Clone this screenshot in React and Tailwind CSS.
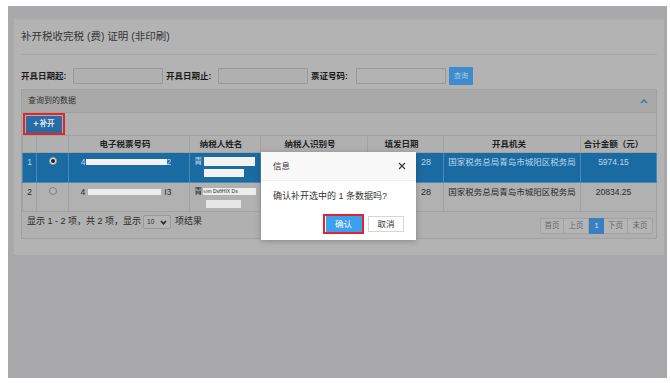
export default function App() {
  const cols = [14, 32, 121, 71, 107, 76, 137, 76];
  return (
    <div className="w-[670px] h-[383px] bg-white pt-[6px] pl-[8px] pr-[3px] pb-[5px] font-['Liberation_Sans','Noto_Sans_CJK_SC',sans-serif] text-[#222]">
      <div className="relative h-full bg-[#a9a9ab] pt-[13px] pl-[6px] pr-[3px]">
        <div className="bg-[#b3b3b3] px-[7px] pb-[16px]">
          <div className="h-[36px] flex items-center border-b border-[#a7a7a7] text-[10.5px] text-[#333]">
            补开税收完税 (费) 证明 (非印刷)
          </div>
          <div className="mt-[12px] h-[18px] flex items-center text-[8.5px] font-bold text-[#1a1a1a]">
            <span className="w-[52px]">开具日期起:</span>
            <div className="w-[90px] h-[16px] bg-[#b0b0b0] border border-[#9a9a9a] rounded-[1px]" />
            <span className="w-[52px] ml-[3px]">开具日期止:</span>
            <div className="w-[90px] h-[16px] bg-[#b0b0b0] border border-[#9a9a9a] rounded-[1px]" />
            <span className="w-[45px] ml-[3px]">票证号码:</span>
            <div className="w-[90px] h-[16px] bg-[#b3b3b3] border border-[#9a9a9a] rounded-[1px]" />
            <div className="ml-[3px] w-[24px] h-[18px] bg-[#3f8bcb] rounded-[1px] flex items-center justify-center text-[7px] font-normal text-[#a9cdec]">
              查询
            </div>
          </div>
          <div className="mt-[4px] border border-[#a0a0a0] bg-[#b0b0b0]">
            <div className="h-[23px] bg-[#a9a9a9] border-b border-[#a0a0a0] flex items-center justify-between pl-[6px] pr-[8px] text-[8px] text-[#333]">
              <span>查询到的数据</span>
              <svg width="8" height="6" viewBox="0 0 8 6">
                <polyline points="1,5 4,2 7,5" fill="none" stroke="#41719b" strokeWidth="1.4" />
              </svg>
            </div>
            <div className="pl-[1px]">
              <div className="w-[42px] h-[22px] border-2 border-[#e0262b] flex items-center justify-center">
                <div className="w-[36px] h-[17px] bg-[#2c6aa4] flex items-center justify-center text-[7.5px] text-[#dfe9f3] font-bold">
                  <span className="text-[9px] leading-none mr-[1px]">+</span>补开
                </div>
              </div>
            </div>
            <table className="w-full table-fixed border-collapse text-[8.5px]">
              <colgroup>
                {cols.map((w, i) => (
                  <col key={i} style={{ width: w }} />
                ))}
              </colgroup>
              <thead>
                <tr className="h-[17px] bg-[#b0b0b0] text-[#222] font-bold">
                  <th className="border border-[#a2a2a2]"></th>
                  <th className="border border-[#a2a2a2]"></th>
                  <th className="border border-[#a2a2a2] pr-[8px]">电子税票号码</th>
                  <th className="border border-[#a2a2a2] pr-[8px]">纳税人姓名</th>
                  <th className="border border-[#a2a2a2] pr-[8px]">纳税人识别号</th>
                  <th className="border border-[#a2a2a2] pr-[8px]">填发日期</th>
                  <th className="border border-[#a2a2a2] pr-[6px]">开具机关</th>
                  <th className="border border-[#a2a2a2] pr-[10px]">合计金额（元）</th>
                </tr>
              </thead>
              <tbody>
                <tr className="h-[30px] bg-[#1b6ba3] text-[#bcd5ea] align-top">
                  <td className="border border-[#4a88b8] text-center pt-[3px]">1</td>
                  <td className="border border-[#4a88b8] pt-[4px]">
                    <div className="mx-auto w-[8px] h-[8px] rounded-full bg-[#e8e8e8] border border-[#999] flex items-center justify-center">
                      <div className="w-[4px] h-[4px] rounded-full bg-[#222]" />
                    </div>
                  </td>
                  <td className="border border-[#4a88b8] pt-[3px]">
                    <div className="flex items-center justify-center pr-[6px]">
                      <span>4</span>
                      <div className="w-[81px] h-[6px] bg-[#f2f2f2]" />
                      <span>2</span>
                    </div>
                  </td>
                  <td className="border border-[#4a88b8] pt-[3px] pl-[4px]">
                    <div className="flex items-center h-[11px]">
                      <span>青</span>
                      <div className="ml-[1px] w-[51px] h-[9px] bg-[#f2f2f2]" />
                    </div>
                    <div className="flex items-center h-[10px] mt-[1px] pl-[10px]">
                      <div className="w-[40px] h-[8px] bg-[#f2f2f2]" />
                    </div>
                  </td>
                  <td className="border border-[#4a88b8]"></td>
                  <td className="border border-[#4a88b8] pt-[3px] text-right pr-[12px] text-[9px]">28</td>
                  <td className="border border-[#4a88b8] pt-[3px] text-center whitespace-nowrap">国家税务总局青岛市城阳区税务局</td>
                  <td className="border border-[#4a88b8] pt-[3px] text-center pr-[10px]">5974.15</td>
                </tr>
                <tr className="h-[29px] bg-[#b1b1b1] text-[#2a2a2a] align-top">
                  <td className="border border-[#a2a2a2] text-center pt-[3px]">2</td>
                  <td className="border border-[#a2a2a2] pt-[4px]">
                    <div className="mx-auto w-[8px] h-[8px] rounded-full bg-[#b6b6b6] border border-[#7d7d7d]" />
                  </td>
                  <td className="border border-[#a2a2a2] pt-[3px]">
                    <div className="flex items-center justify-center pr-[6px]">
                      <span>4</span>
                      <div className="ml-[3px] w-[73px] h-[6px] bg-[#ececec]" />
                      <span className="ml-[3px]">I3</span>
                    </div>
                  </td>
                  <td className="border border-[#a2a2a2] pt-[3px] pl-[4px]">
                    <div className="flex items-center h-[11px]">
                      <span>青</span>
                      <div className="w-[53px] h-[7px] bg-[#ececec] text-[5px] leading-[7px] text-[#333] overflow-hidden whitespace-nowrap pl-[1px]">
                        ωm DsθHIX Ds
                      </div>
                    </div>
                    <div className="flex items-center h-[10px] mt-[2px] pl-[12px]">
                      <div className="w-[35px] h-[8px] bg-[#e6e6e6]" />
                    </div>
                  </td>
                  <td className="border border-[#a2a2a2]"></td>
                  <td className="border border-[#a2a2a2] pt-[3px] text-right pr-[12px] text-[9px]">28</td>
                  <td className="border border-[#a2a2a2] pt-[3px] text-center whitespace-nowrap">国家税务总局青岛市城阳区税务局</td>
                  <td className="border border-[#a2a2a2] pt-[3px] text-center pr-[10px]">20834.25</td>
                </tr>
              </tbody>
            </table>
            <div className="h-[26px] flex justify-between pl-[5px] pr-[3px] text-[9px] text-[#2a2a2a]">
              <div className="mt-[3px] h-[14px] flex items-center">
                <span>显示 1 - 2 项，共 2 项，显示</span>
                <div className="ml-[2px] w-[28px] h-[14px] bg-[#b4b4b4] border border-[#9a9a9a] rounded-[2px] flex items-center justify-between px-[3px]">
                  <span className="text-[6.5px]">10</span>
                  <svg width="7" height="5" viewBox="0 0 7 5">
                    <polyline points="1,1 3.5,3.8 6,1" fill="none" stroke="#222" strokeWidth="1.5" />
                  </svg>
                </div>
                <span className="ml-[4px]">项结果</span>
              </div>
              <div className="mt-[6px] h-[16px] flex text-[7.5px] text-[#666]">
                <div className="w-[24px] border border-[#a2a2a2] bg-[#b5b5b5] flex items-center justify-center rounded-l-[2px]">首页</div>
                <div className="w-[25px] border border-l-0 border-[#a2a2a2] bg-[#b5b5b5] flex items-center justify-center">上页</div>
                <div className="w-[15px] bg-[#3a7fbf] text-[#d6e6f3] flex items-center justify-center">1</div>
                <div className="w-[24px] border border-l-0 border-[#a2a2a2] bg-[#b5b5b5] flex items-center justify-center">下页</div>
                <div className="w-[25px] border border-l-0 border-[#a2a2a2] bg-[#b5b5b5] flex items-center justify-center rounded-r-[2px]">末页</div>
              </div>
            </div>
          </div>
        </div>

        <div className="absolute left-[253px] top-[146px] w-[155px] h-[88px] bg-white shadow-[0_1px_6px_rgba(0,0,0,0.25)] flex flex-col">
          <div className="h-[29px] shrink-0 bg-[#f8f8f8] border-b border-[#eeeeee] flex items-center justify-between pl-[12px] pr-[10px] text-[8.5px] text-[#333]">
            <span>信息</span>
            <svg width="8" height="8" viewBox="0 0 8 8">
              <path d="M1 1 L7 7 M7 1 L1 7" stroke="#333" strokeWidth="1.1" />
            </svg>
          </div>
          <div className="pl-[12px] pt-[9px] h-[24px] text-[9px] text-[#333] leading-[12px]">
            确认补开选中的 1 条数据吗?
          </div>
          <div className="mt-[9px] flex justify-end items-center pr-[12px] gap-[4px]">
            <div className="w-[41px] h-[20px] border-2 border-[#e0262b] flex items-center justify-center">
              <div className="w-[36px] h-[16px] bg-[#3d9ff0] flex items-center justify-center text-[8.5px] text-white">确认</div>
            </div>
            <div className="w-[36px] h-[16px] border border-[#d6d6d6] bg-white flex items-center justify-center text-[8.5px] text-[#333]">取消</div>
          </div>
        </div>
      </div>
    </div>
  );
}
